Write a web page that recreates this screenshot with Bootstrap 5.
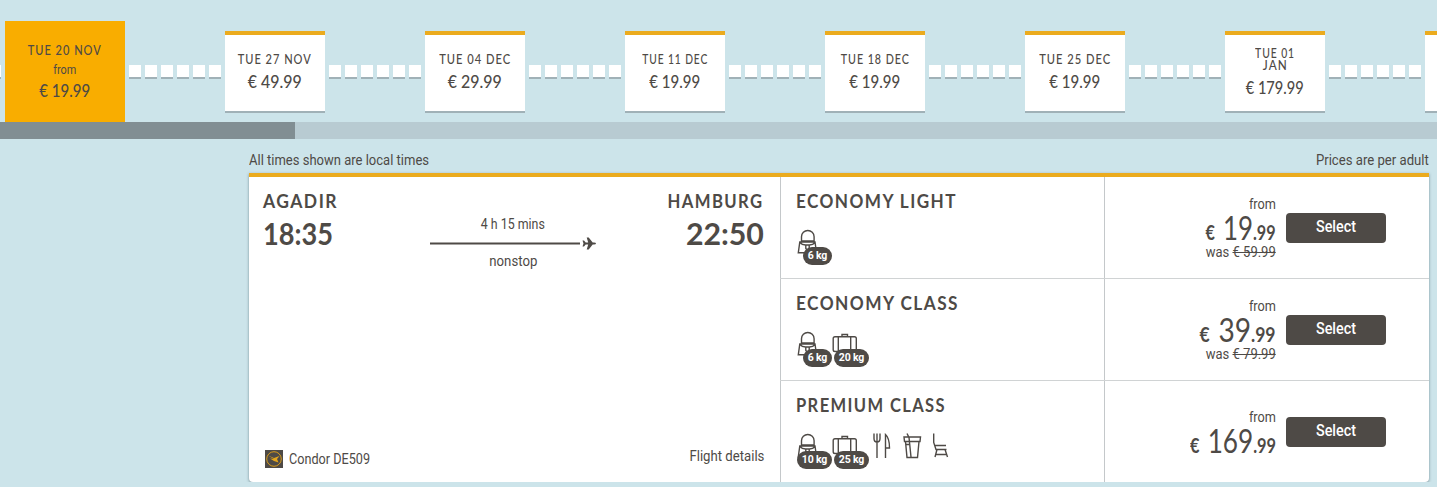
<!DOCTYPE html>
<html lang="en">
<head>
    <meta charset="UTF-8">
    <meta name="viewport" content="width=device-width, initial-scale=1.0">
    <title>Flight selection</title>
    <link href="https://cdn.jsdelivr.net/npm/bootstrap@5.3.3/dist/css/bootstrap.min.css" rel="stylesheet">

    <style>
        body {
            background-color: #cce4ea;
            color: #4e4a46;
            font-family: "Roboto", sans-serif;
            font-size: 15px;
            line-height: 18px;
            overflow: hidden;
        }

        /* text that is condensed to data-width */
        .fit {
            display: inline-block;
            white-space: nowrap;
            vertical-align: top;
            transform-origin: center;
        }

        .fit-start {
            transform-origin: left;
        }

        .fit-end {
            transform-origin: right;
        }

        /* date strip */
        .date-strip {
            height: 122px;
            overflow: hidden;
        }

        .date-edge {
            width: 1px;
            height: 12px;
            margin: 65px 4px 0 0;
            background-color: #fff;
            box-shadow: 0 2px 0 #a0b1b7;
        }

        .date-box {
            width: 100px;
            height: 80px;
            margin-top: 31px;
            padding: 0 5px;
            background-color: #fff;
            border-top: 4px solid #ebab1e;
            box-shadow: 0 2px 0 #a0b1b7;
        }

        .date-box.selected {
            width: 120px;
            height: 101px;
            margin-top: 21px;
            padding-top: 2px;
            background-color: #f9ad00;
            border-top: 0;
            box-shadow: none;
        }

        .date-day {
            font-family: "Lato", sans-serif;
            font-size: 12.5px;
            font-weight: 500;
            line-height: 12px;
            letter-spacing: 1.1px;
        }

        .date-from {
            font-size: 12px;
            line-height: 16px;
            margin-top: 5px;
        }

        .date-price {
            font-family: "Lato", sans-serif;
            font-size: 17.5px;
            font-weight: 500;
            line-height: 20px;
            margin-top: 6px;
        }

        .selected .date-price {
            margin-top: 3px;
        }

        .date-dots {
            gap: 4px;
            padding: 65px 4px 0;
        }

        .date-dots span {
            width: 12px;
            height: 12px;
            background-color: #fff;
            box-shadow: 0 2px 0 #a0b1b7;
        }

        .strip-track {
            height: 17px;
            background-color: #b8cbd2;
        }

        .strip-thumb {
            width: 295px;
            background-color: #818e93;
        }

        /* flight result */
        .flight-area {
            width: 1180px;
            margin-left: 249px;
        }

        .flight-notes {
            height: 34px;
            padding-top: 12px;
        }

        .flight-box {
            height: 309px;
            background-color: #fff;
            border-top: 4px solid #ebab1e;
            border-radius: 0 0 4px 4px;
            box-shadow: 0 1px 3px rgba(60, 85, 95, .6);
        }

        .flight-route {
            width: 531px;
            padding: 14px 16px 14px 14px;
        }

        .place-name,
        .fare-name {
            font-family: "Lato", sans-serif;
            font-size: 18px;
            font-weight: 700;
            line-height: 20px;
            letter-spacing: 1.5px;
        }

        .place-time {
            font-family: "Lato", sans-serif;
            font-size: 31px;
            font-weight: 700;
            line-height: 36px;
            margin-top: 4px;
        }

        .place-from {
            width: 166px;
        }

        .route-middle {
            width: 168px;
            padding-top: 24px;
        }

        .carrier-logo {
            margin: 0 6px 0 2px;
        }

        .details {
            margin-bottom: 3px;
        }

        .fare-row {
            height: 102px;
            border-bottom: 1px solid #d0d3d4;
        }

        .fare-row:last-child {
            height: 101px;
            border-bottom: 0;
        }

        .fare-info {
            width: 325px;
            border-left: 1px solid #c4c8ca;
            border-right: 1px solid #c4c8ca;
            padding: 14px 0 0 15px;
        }

        .fare-icons {
            margin-top: 18px;
        }

        .fare-icon {
            display: block;
            width: 25px;
            height: 26px;
            fill: none;
            stroke: #4e4a46;
            stroke-width: 1.4;
        }

        .item-bag {
            width: 36px;
        }

        .item-case {
            width: 37px;
            margin-right: 4px;
        }

        .extra-icon {
            width: 29.5px;
        }

        .weight-pill {
            position: absolute;
            top: 18px;
            right: 0;
            height: 18px;
            padding: 0 5px;
            border-radius: 9px;
            background-color: #4e4a46;
            color: #fff;
            font-size: 10.5px;
            font-weight: 700;
            line-height: 18px;
            letter-spacing: -.2px;
            white-space: nowrap;
        }

        .fare-price {
            width: 171px;
        }

        .price-main {
            height: 30px;
            padding-top: 8px;
            font-family: "Lato", sans-serif;
            font-size: 20px;
            font-weight: 700;
            line-height: 22px;
        }

        .price-main b {
            margin-left: 5px;
            font-size: 32px;
            font-weight: 400;
            line-height: 0;
        }

        .btn-select {
            width: 100px;
            height: 30px;
            margin-left: 10px;
            padding: 0;
            border: 0;
            border-radius: 4px;
            background-color: #4e4a46;
            color: #fff;
            font-size: 16.5px;
            font-weight: 500;
            line-height: 28px;
        }

        .btn-select .fit {
            vertical-align: 1px;
        }
    </style>
</head>
<body>
    <svg class="d-none">
        <symbol id="icon-bag" viewBox="0 0 25 26">
            <path d="M5.500 12V7.800a6.300 6.300 0 0 1 12.600 0V12Z M3.800 13H19L20.500 23.700H2.300Z M4 13.500q2 2.500 5.500 2.500h4q3.500 0 5.500-2.500 M9.800 16v3.500l1.700 1.500l1.700-1.500V16" />
        </symbol>
        <symbol id="icon-case" viewBox="0 0 25 26">
            <path d="M3 5.700H22.500a1.800 1.800 0 0 1 1.800 1.800V18.700a1.800 1.800 0 0 1-1.800 1.800H3a1.800 1.800 0 0 1-1.800-1.800V7.500a1.800 1.800 0 0 1 1.800-1.800Z M6.300 5.700v15 M18.700 5.700v15 M10 5.500V3.500h5.500v2" />
        </symbol>
        <symbol id="icon-meal" viewBox="0 0 25 26">
            <path d="M1 .5v5q0 3.500 3 3.500t3-3.500v-5 M4 .5V25 M12.500 25V1.500q4 3.500 4 13.500h-4" />
        </symbol>
        <symbol id="icon-drink" viewBox="0 0 25 26">
            <path d="M1 4H17.500L17 8.500H1.500Z M2.500 8.500L4 24.500H14.500L16 8.500 M4 .5L6 4.500L8 24 M2.500 11.500H6" />
        </symbol>
        <symbol id="icon-seat" viewBox="0 0 25 26">
            <path d="M1.700 .5V9.500L4 16.500H14.500 M2.500 12.500H14 M5 16.500L3 24 M13 16.500L15.500 24 M4 21.500H15" />
        </symbol>
    </svg>

    <div class="date-strip d-flex flex-nowrap" id="dateStrip"></div>
    <div class="strip-track d-flex">
        <div class="strip-thumb"></div>
    </div>

    <main class="flight-area">
        <div class="flight-notes d-flex justify-content-between">
            <span class="fit fit-start" data-width="180">All times shown are local times</span>
            <span class="fit fit-end" data-width="113">Prices are per adult</span>
        </div>

        <div class="flight-box d-flex">
            <section class="flight-route d-flex flex-column justify-content-between">
                <div class="d-flex">
                    <div class="place-from">
                        <div class="place-name"><span class="fit fit-start" data-width="75">AGADIR</span></div>
                        <div class="place-time"><span class="fit fit-start" data-width="70">18:35</span></div>
                    </div>
                    <div class="route-middle text-center">
                        <div><span class="fit" data-width="64">4 h 15 mins</span></div>
                        <svg class="d-block" width="168" height="19" viewBox="0 0 168 19">
                            <path d="M1 10.500H151" stroke="#4e4a46" stroke-width="2" />
                            <path d="M153.500 7.500h1.500l1.700 2h2.500l-1.500-5h2l4 5h1.300q2 0 2 1t-2 1h-1.300l-4 5h-2l1.500-5h-2.500l-1.700 2h-1.500l1-3Z" fill="#4e4a46" />
                        </svg>
                        <div><span class="fit" data-width="48">nonstop</span></div>
                    </div>
                    <div class="flex-grow-1 text-end">
                        <div class="place-name"><span class="fit fit-end" data-width="96">HAMBURG</span></div>
                        <div class="place-time"><span class="fit fit-end" data-width="78">22:50</span></div>
                    </div>
                </div>
                <div class="d-flex justify-content-between align-items-end">
                    <div class="d-flex align-items-center">
                        <svg class="carrier-logo" width="18" height="18" viewBox="0 0 18 18">
                            <path d="M0 0H18V18H0Z" fill="#4e4a46" />
                            <circle cx="9" cy="9" r="7.300" fill="none" stroke="#d89b1c" />
                            <path d="M3 5.500l6 2.500l5.500-2l-2.500 3l1.500 3.500l-4.500-1.500l-4-2.500l4 .5Z" fill="#e4a51b" />
                        </svg>
                        <span class="fit fit-start" data-width="81">Condor DE509</span>
                    </div>
                    <span class="details fit fit-end" data-width="75">Flight details</span>
                </div>
            </section>
            <section class="flex-grow-1" id="fareList"></section>
        </div>
    </main>

    <script src="https://cdn.jsdelivr.net/npm/bootstrap@5.3.3/dist/js/bootstrap.bundle.min.js"></script>
    <script>
        const dates = [
            { day: [['TUE 20 NOV', 74]], price: '19.99', width: 51, selected: true },
            { day: [['TUE 27 NOV', 74]], price: '49.99', width: 54 },
            { day: [['TUE 04 DEC', 72]], price: '29.99', width: 54 },
            { day: [['TUE 11 DEC', 66]], price: '19.99', width: 51 },
            { day: [['TUE 18 DEC', 69]], price: '19.99', width: 51 },
            { day: [['TUE 25 DEC', 72]], price: '19.99', width: 51 },
            { day: [['TUE 01', 40], ['JAN', 25]], price: '179.99', width: 58 }
        ];

        const fares = [
            { name: 'ECONOMY LIGHT', nameWidth: 161, bag: '6 kg', price: '19', width: 70, was: '59.99' },
            { name: 'ECONOMY CLASS', nameWidth: 163, bag: '6 kg', luggage: '20 kg', price: '39', width: 76, was: '79.99' },
            { name: 'PREMIUM CLASS', nameWidth: 150, bag: '10 kg', luggage: '25 kg', extras: true, price: '169', width: 86 }
        ];

        function icon(name) {
            return `<svg class="fare-icon"><use href="#icon-${name}"></use></svg>`;
        }

        function weightIcon(name, weight) {
            return `<div class="item-${name} position-relative">${icon(name)}<span class="weight-pill">${weight}</span></div>`;
        }

        function extraIcon(name) {
            return `<div class="extra-icon">${icon(name)}</div>`;
        }

        function dateBox(date) {
            const lines = date.day.map(([text, width]) => `<div><span class="fit" data-width="${width}">${text}</span></div>`);
            return `
                <div class="date-box flex-shrink-0 d-flex flex-column justify-content-center text-center ${date.selected ? 'selected' : ''}">
                    <div class="date-day">${lines.join('')}</div>
                    ${date.selected ? '<div class="date-from"><span class="fit" data-width="23">from</span></div>' : ''}
                    <div class="date-price"><span class="fit" data-width="${date.width}">€ ${date.price}</span></div>
                </div>
                <div class="date-dots d-flex flex-shrink-0">${'<span></span>'.repeat(6)}</div>
            `;
        }

        function fareRow(fare) {
            return `
                <div class="fare-row d-flex">
                    <div class="fare-info">
                        <div class="fare-name"><span class="fit fit-start" data-width="${fare.nameWidth}">${fare.name}</span></div>
                        <div class="fare-icons d-flex">
                            ${weightIcon('bag', fare.bag)}
                            ${fare.luggage ? weightIcon('case', fare.luggage) : ''}
                            ${fare.extras ? extraIcon('meal') + extraIcon('drink') + extraIcon('seat') : ''}
                        </div>
                    </div>
                    <div class="d-flex align-items-center">
                        <div class="fare-price text-end">
                            <div><span class="fit fit-end" data-width="27">from</span></div>
                            <div class="price-main"><span class="fit fit-end" data-width="${fare.width}">€ <b>${fare.price}</b>.99</span></div>
                            ${fare.was ? `<div><span class="fit fit-end" data-width="70">was <s>€ ${fare.was}</s></span></div>` : ''}
                        </div>
                        <button class="btn btn-select" type="button"><span class="fit" data-width="40">Select</span></button>
                    </div>
                </div>
            `;
        }

        function fitText() {
            document.querySelectorAll('.fit').forEach(el => {
                const scale = el.dataset.width / el.getBoundingClientRect().width;
                el.style.transform = `scaleX(${scale})`;
            });
        }

        document.getElementById('dateStrip').innerHTML =
            '<div class="date-edge flex-shrink-0"></div>' + dates.map(dateBox).join('') + '<div class="date-box flex-shrink-0"></div>';
        document.getElementById('fareList').innerHTML = fares.map(fareRow).join('');
        fitText();
    </script>
</body>
</html>
